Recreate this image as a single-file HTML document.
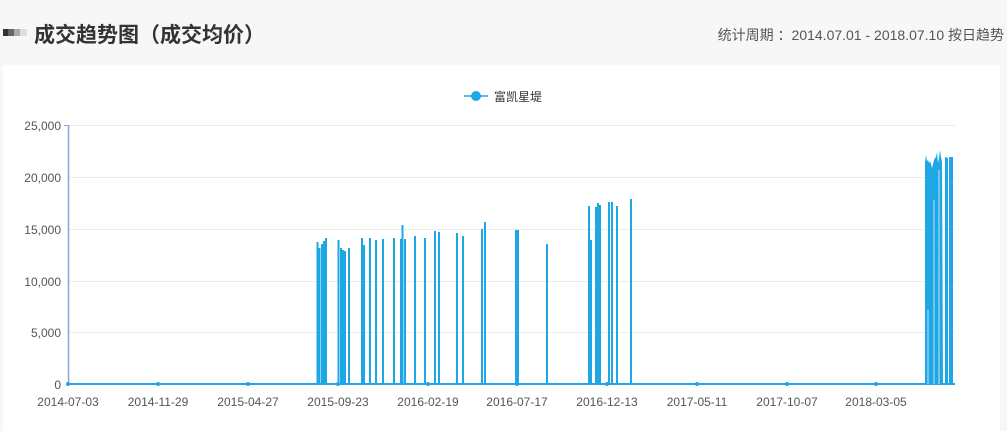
<!DOCTYPE html>
<html><head><meta charset="utf-8"><style>
body{margin:0;width:1007px;height:431px;background:#f7f7f7;overflow:hidden;font-family:"Liberation Sans","Noto Sans CJK SC",sans-serif;position:relative}
.t{position:absolute;left:34px;top:19px;font-size:21px;font-weight:bold;color:#333}
.ic{position:absolute;left:3px;top:29px;height:7px;width:24px;background:linear-gradient(90deg,#333 0,#333 5px,#666 5px,#666 11px,#aaa 11px,#aaa 17px,#ddd 17px,#ddd 24px)}
.r{position:absolute;right:3px;top:25px;font-size:14px;color:#555}
.p{position:absolute;left:3px;top:65px;width:997px;height:366px;background:#fff}
</style></head><body>
<div class="ic"></div>
<div class="t">成交趋势图（成交均价）</div>
<div class="r">统计周期 ：2014.07.01 - 2018.07.10 按日趋势</div>
<div class="p"></div>
<svg width="1007" height="431" style="position:absolute;left:0;top:0" font-family="Liberation Sans,Noto Sans CJK SC,sans-serif">
<g stroke="#ececec" stroke-width="1">
<line x1="68" y1="125.5" x2="955" y2="125.5"/><line x1="68" y1="177.5" x2="955" y2="177.5"/><line x1="68" y1="229.5" x2="955" y2="229.5"/><line x1="68" y1="281.5" x2="955" y2="281.5"/><line x1="68" y1="332.5" x2="955" y2="332.5"/>
</g>
<line x1="68.5" y1="125" x2="68.5" y2="384" stroke="#8fa3d8" stroke-width="1.5"/>
<line x1="64" y1="125.5" x2="68" y2="125.5" stroke="#8fa3d8"/>
<g font-size="12" fill="#555" text-anchor="end">
<text x="61" y="130">25,000</text><text x="61" y="182">20,000</text><text x="61" y="234">15,000</text><text x="61" y="286">10,000</text><text x="61" y="337">5,000</text><text x="61" y="389">0</text>
</g>
<g font-size="12" fill="#555" text-anchor="middle">
<text x="68" y="406">2014-07-03</text><text x="158" y="406">2014-11-29</text><text x="248" y="406">2015-04-27</text><text x="338" y="406">2015-09-23</text><text x="428" y="406">2016-02-19</text><text x="517" y="406">2016-07-17</text><text x="607" y="406">2016-12-13</text><text x="697" y="406">2017-05-11</text><text x="787" y="406">2017-10-07</text><text x="876" y="406">2018-03-05</text>
</g>
<line x1="68" y1="384" x2="955" y2="384" stroke="#1ea7e4" stroke-width="2"/>
<g fill="#1ea7e4"><circle cx="68" cy="384" r="2"/><circle cx="158" cy="384" r="2"/><circle cx="248" cy="384" r="2"/><circle cx="338" cy="384" r="2"/><circle cx="428" cy="384" r="2"/><circle cx="517" cy="384" r="2"/><circle cx="607" cy="384" r="2"/><circle cx="697" cy="384" r="2"/><circle cx="787" cy="384" r="2"/><circle cx="876" cy="384" r="2"/></g>
<path fill="none" stroke="#1ea7e4" stroke-width="2" d="
M317.5 384V242 M319.5 384V248 M322 384V244 M324 384V241 M326 384V238
M338.5 384V240 M341 384V248 M343 384V250 M345 384V251 M349 384V248
M362 384V238 M364 384V245 M370 384V238 M376 384V240 M383 384V239
M394 384V238 M401 384V239 M402.5 384V225 M405 384V239 M415 384V236 M425 384V238
M435 384V231 M439 384V232 M457 384V233 M463 384V236
M482 384V229 M485 384V222 M516 384V230 M518 384V230 M547 384V244
M589 384V206 M591 384V240 M596 384V207 M598 384V203 M600 384V205
M609 384V202 M612 384V202 M617 384V206 M631 384V199"/>
<polygon fill="#1ea7e4" points="925,384 925,162 926,155 927,161 928,160 929,163 930,161 931,164 932,168 933,164 934,160 935,158 936,157 937,152 938,163 939,158 940,150 941,157 942,162 943,384"/>
<polygon fill="#1ea7e4" points="945,384 945,157 948,158 948,384"/>
<polygon fill="#1ea7e4" points="949,384 949,157 953,157 953,384"/>
<g stroke="#fff" stroke-width="0.7"><line x1="928" y1="310" x2="928" y2="384"/><line x1="934" y1="200" x2="934" y2="384"/><line x1="939" y1="170" x2="939" y2="384"/></g>
<line x1="464" y1="96" x2="488" y2="96" stroke="#1ea7e4" stroke-width="1.5"/>
<circle cx="476" cy="96" r="5" fill="#1ea7e4"/>
<text x="494" y="101" font-size="12" fill="#333">富凯星堤</text>
</svg>
</body></html>
